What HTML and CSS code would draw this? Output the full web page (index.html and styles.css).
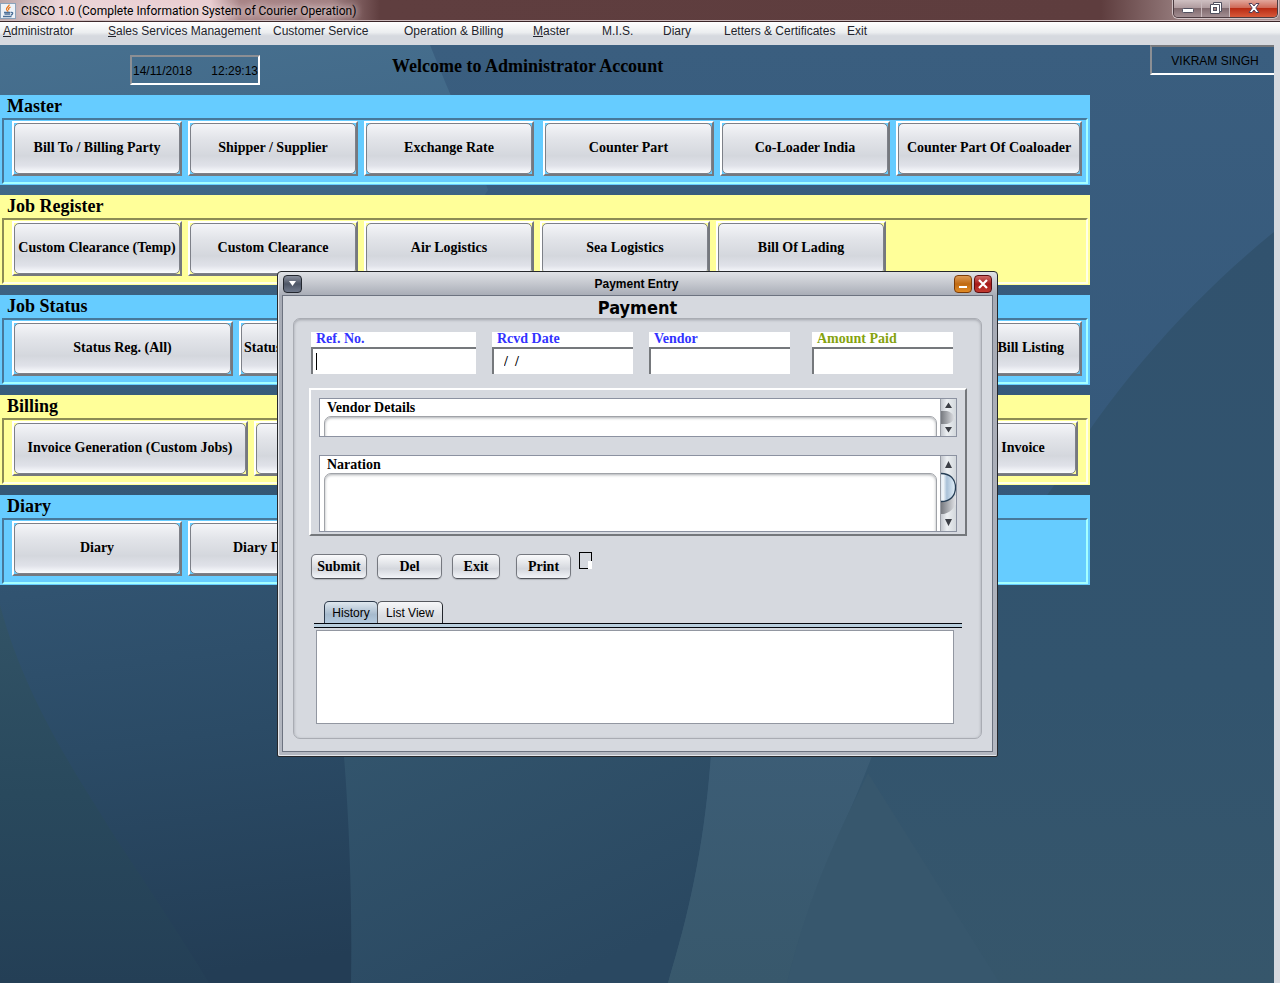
FILE: index.html
```html
<!DOCTYPE html>
<html lang="en">
<head>
  <meta charset="UTF-8">
  <meta name="viewport" content="width=device-width, initial-scale=1.0">
  <title>CISCO 1.0 (Complete Information System of Courier Operation)</title>
  <link rel="stylesheet" href="styles.css">
</head>
<body>

  <!-- window title bar -->
  <header class="titlebar">
    <svg class="app-icon" viewBox="0 0 16 16" aria-hidden="true">
      <rect x="0.5" y="0.5" width="15" height="15" fill="#eef3f8" stroke="#8ba3bb"/>
      <path d="M9 1.5C10 3 6 4.5 6.500 6.500C7 7.500 8 8 8 8.800M10.500 4C8.500 5 8 6 9 7.200" fill="none" stroke="#e8761c" stroke-width="1.300"/>
      <path d="M4 9.500H10.500M4.500 11.200H10M3 13.500H11.500M11 9.500C13.500 9 13 11.500 10.800 12" fill="none" stroke="#4a6f97" stroke-width="1.300"/>
    </svg>
    <span class="titlebar-text">CISCO 1.0 (Complete Information System of Courier Operation)</span>
    <div class="win-buttons">
      <button type="button" class="win-btn" aria-label="Minimize">
        <svg width="14" height="12" viewBox="0 0 14 12"><rect x="1.500" y="6.500" width="11" height="4" rx="1" fill="#fff" stroke="#50505f"/></svg>
      </button>
      <button type="button" class="win-btn" aria-label="Restore">
        <svg width="14" height="12" viewBox="0 0 14 12"><path d="M4.500 0.500H12.500V9.500H10.500V11.500H1.500V2.500H4.500Z" fill="#fff" stroke="#50505f"/><path d="M4.500 2.500H10.500V9.500" fill="none" stroke="#50505f"/><rect x="4.500" y="5.500" width="3" height="3" fill="#a88" stroke="#50505f"/></svg>
      </button>
      <button type="button" class="win-btn win-close" aria-label="Close">
        <svg width="14" height="12" viewBox="0 0 14 12"><path d="M2 1.500H5L7 4L9 1.500H12L8.800 6L12 10.500H9L7 8L5 10.500H2L5.200 6Z" fill="#fff" stroke="#50405a"/></svg>
      </button>
    </div>
  </header>

  <nav class="menubar">
    <a href="#"><u>A</u>dministrator</a>
    <a href="#"><u>S</u>ales Services Management</a>
    <a href="#">Customer Service</a>
    <a href="#">Operation &amp; Billing</a>
    <a href="#"><u>M</u>aster</a>
    <a href="#">M.I.S.</a>
    <a href="#">Diary</a>
    <a href="#">Letters &amp; Certificates</a>
    <a href="#">Exit</a>
  </nav>

  <main class="desktop">
    <svg class="wallpaper" viewBox="0 45 1274 938" preserveAspectRatio="none" aria-hidden="true">
      <defs>
        <linearGradient id="base" x1="0" y1="0" x2="0" y2="1">
          <stop offset="0" stop-color="#3a5e7f"/>
          <stop offset="0.5" stop-color="#35587a"/>
          <stop offset="1" stop-color="#36566c"/>
        </linearGradient>
        <linearGradient id="left" gradientUnits="userSpaceOnUse" x1="0" y1="45" x2="120" y2="983">
          <stop offset="0" stop-color="#47708f"/>
          <stop offset="0.3" stop-color="#3b6080"/>
          <stop offset="0.58" stop-color="#315370"/>
          <stop offset="0.75" stop-color="#2b4b66"/>
          <stop offset="1" stop-color="#233d55"/>
        </linearGradient>
        <linearGradient id="mid" gradientUnits="userSpaceOnUse" x1="400" y1="650" x2="560" y2="983">
          <stop offset="0" stop-color="#34576f"/>
          <stop offset="1" stop-color="#2a4861"/>
        </linearGradient>
        <linearGradient id="wedge" x1="0" y1="0" x2="0" y2="1">
          <stop offset="0" stop-color="#325366"/>
          <stop offset="0.5" stop-color="#29495d"/>
          <stop offset="1" stop-color="#243f56"/>
        </linearGradient>
        <linearGradient id="band" x1="0" y1="0" x2="0" y2="1">
          <stop offset="0" stop-color="#3c5d76"/>
          <stop offset="1" stop-color="#38586c"/>
        </linearGradient>
        <linearGradient id="right" gradientUnits="userSpaceOnUse" x1="0" y1="232" x2="0" y2="983">
          <stop offset="0" stop-color="#31526e"/>
          <stop offset="0.6" stop-color="#32546e"/>
          <stop offset="1" stop-color="#36566b"/>
        </linearGradient>
      </defs>
      <rect x="0" y="45" width="1274" height="938" fill="url(#base)"/>
      <path d="M1274 232C1190 300 1110 390 1053 487L868 740L700 983H1274Z" fill="url(#right)"/>
      <path d="M300 580H900V740H712C706 840 690 910 668 983H300Z" fill="url(#mid)"/>
      <path d="M0 45H430C450 95 475 150 488 190L300 480C335 600 354 800 351 983H0Z" fill="url(#left)"/>
      <path d="M0 605C25 700 80 780 115 837C150 890 180 935 209 983H0Z" fill="url(#wedge)"/>
      <path d="M712 740C706 840 690 910 668 983H787C810 890 845 830 878 740Z" fill="url(#band)"/>
      <path d="M868 773L1000 983H787C810 890 840 830 868 773Z" fill="#37576d"/>
    </svg>

    <div class="topline">
      <div class="clock"><span>14/11/2018</span><span>12:29:13</span></div>
      <h1 class="welcome">Welcome to Administrator Account</h1>
      <div class="user">VIKRAM SINGH</div>
    </div>

    <div class="panels">
      <section class="panel blue">
        <h2>Master</h2>
        <div class="panel-row">
          <button type="button">Bill To / Billing Party</button>
          <button type="button">Shipper / Supplier</button>
          <button type="button">Exchange Rate</button>
          <button type="button" class="apart">Counter Part</button>
          <button type="button">Co-Loader India</button>
          <button type="button" class="w-coloader">Counter Part Of Coaloader</button>
        </div>
      </section>

      <section class="panel yellow">
        <h2>Job Register</h2>
        <div class="panel-row">
          <button type="button">Custom Clearance (Temp)</button>
          <button type="button">Custom Clearance</button>
          <button type="button">Air Logistics</button>
          <button type="button">Sea Logistics</button>
          <button type="button">Bill Of Lading</button>
        </div>
      </section>

      <section class="panel blue">
        <h2>Job Status</h2>
        <div class="panel-row">
          <button type="button" class="w-status">Status Reg. (All)</button>
          <button type="button" class="text-left">Status</button>
          <button type="button" class="push text-right">Bill Listing</button>
        </div>
      </section>

      <section class="panel yellow">
        <h2>Billing</h2>
        <div class="panel-row row-billing">
          <button type="button" class="w-invoice">Invoice Generation (Custom Jobs)</button>
          <button type="button" aria-label="Billing"></button>
          <button type="button" class="push w-short">Invoice</button>
        </div>
      </section>

      <section class="panel blue">
        <h2>Diary</h2>
        <div class="panel-row">
          <button type="button">Diary</button>
          <button type="button" class="text-indent">Diary D</button>
        </div>
      </section>
    </div>

    <!-- payment entry internal frame -->
    <div class="frame" role="dialog" aria-labelledby="frameTitle">
      <div class="frame-bar">
        <button type="button" class="frame-btn" aria-label="Window menu">
          <svg width="9" height="7" viewBox="0 0 9 7"><path d="M1 1H8L4.500 6Z" fill="#fff"/></svg>
        </button>
        <span class="frame-title" id="frameTitle">Payment Entry</span>
        <button type="button" class="frame-btn orange" aria-label="Minimize">
          <svg width="10" height="10" viewBox="0 0 10 10"><rect x="1" y="7" width="8" height="2" fill="#fff"/></svg>
        </button>
        <button type="button" class="frame-btn red" aria-label="Close">
          <svg width="10" height="10" viewBox="0 0 10 10"><path d="M1 1L9 9M9 1L1 9" stroke="#fff" stroke-width="2.200"/></svg>
        </button>
      </div>

      <form class="frame-body">
        <h3>Payment</h3>
        <div class="form-box">
          <div class="fields">
            <div class="field field-ref">
              <label for="refNo">Ref. No.</label>
              <div class="field-input"><span class="caret"></span><input type="text" id="refNo"></div>
            </div>
            <div class="field">
              <label for="rcvdDate">Rcvd Date</label>
              <div class="field-input"><input type="text" id="rcvdDate" class="date" value="/  /"></div>
            </div>
            <div class="field">
              <label for="vendor">Vendor</label>
              <div class="field-input"><input type="text" id="vendor"></div>
            </div>
            <div class="field field-amount">
              <label for="amount">Amount Paid</label>
              <div class="field-input"><input type="text" id="amount"></div>
            </div>
          </div>

          <div class="notes">
            <div class="note note-vendor">
              <div class="note-main">
                <label for="vendorDetails">Vendor Details</label>
                <textarea id="vendorDetails"></textarea>
              </div>
              <svg class="scroll" width="15" height="37" viewBox="0 0 15 37" aria-hidden="true">
                <defs>
                  <linearGradient id="track"><stop offset="0" stop-color="#c4c8cf"/><stop offset="0.4" stop-color="#eceff2"/><stop offset="1" stop-color="#d3d8dc"/></linearGradient>
                  <linearGradient id="shade"><stop offset="0" stop-color="#777a80"/><stop offset="1" stop-color="#e2e4e8"/></linearGradient>
                </defs>
                <rect width="15" height="37" fill="url(#track)"/>
                <path d="M0 12H6Q11 13 14 18.500Q11 24 6 25H0Z" fill="url(#shade)"/>
                <path d="M4 9H11L7.500 3.500ZM4 28H11L7.500 33.500Z" fill="#3c3f46"/>
              </svg>
            </div>
            <div class="note note-naration">
              <div class="note-main">
                <label for="naration">Naration</label>
                <textarea id="naration"></textarea>
              </div>
              <svg class="scroll" width="15" height="75" viewBox="0 0 15 75" aria-hidden="true">
                <defs>
                  <linearGradient id="thumb"><stop offset="0" stop-color="#dfe9f2"/><stop offset="0.150" stop-color="#f4f8fb"/><stop offset="0.400" stop-color="#a9c1d8"/><stop offset="1" stop-color="#e4f1fa"/></linearGradient>
                </defs>
                <rect width="15" height="75" fill="url(#track)"/>
                <path d="M0 40H15V48Q11 56 3 58H0Z" fill="url(#shade)"/>
                <path d="M0 17.500C9 17.500 14.500 23 14.500 31.500C14.500 40 9 45.500 0 45.500" fill="url(#thumb)" stroke="#263e55" stroke-width="1.300"/>
                <path d="M4 12H11L7.500 5ZM4 63H11L7.500 70Z" fill="#3c3f46"/>
              </svg>
            </div>
          </div>

          <div class="actions">
            <button type="button" class="w-submit">Submit</button>
            <button type="button" class="w-del">Del</button>
            <button type="button" class="w-exit">Exit</button>
            <button type="button" class="w-print">Print</button>
            <svg class="marker" width="13" height="17" viewBox="0 0 13 17" aria-hidden="true">
              <rect x="0.500" y="0.500" width="12" height="16" fill="none" stroke="#000"/>
              <rect x="9" y="9" width="4" height="8" fill="#fff"/>
            </svg>
          </div>

          <div class="tabs" role="tablist">
            <button type="button" role="tab" class="active" aria-selected="true">History</button>
            <button type="button" role="tab" aria-selected="false">List View</button>
          </div>
          <div class="tab-line"></div>
          <div class="tab-pane" role="tabpanel"></div>
        </div>
      </form>
    </div>
  </main>

</body>
</html>
```

FILE: styles.css
```css
* {
  box-sizing: border-box;
}
html {
  height: 100%;
}
body {
  margin: 0;
  min-height: 100%;
  display: flex;
  flex-direction: column;
  background: #d6d9df;
  font-family: "Liberation Sans", Arial, sans-serif;
  font-size: 12px;
  color: #000;
}
button, input, textarea {
  font: inherit;
  color: inherit;
  margin: 0;
}
h1, h2, h3 {
  margin: 0;
  font-weight: bold;
}

/* title bar */
.titlebar {
  display: flex;
  align-items: center;
  height: 22px;
  gap: 5px;
  background: linear-gradient(to right, #b9a4a6 0, #ecd5d8 60px, #e9cdd0 210px, #a88486 240px, #a38284 330px, #5f3e3f 380px, #5e3d3e 86%, #9d8485 93%, #a89292 100%);
  border-bottom: 1px solid #3a2528;
  box-shadow: inset 0 -1px #cbb9bb;
}
.app-icon {
  width: 16px;
  height: 16px;
}
.titlebar-text {
  flex: 1;
  font-family: Roboto, "Noto Sans", sans-serif;
  font-size: 12px;
  line-height: 20px;
  white-space: nowrap;
  text-shadow: 0 0 6px #eedfe1, 0 0 8px #eedfe1;
}
.win-buttons {
  display: flex;
  align-self: flex-start;
  margin-right: 2px;
  border: 1px solid #4b3b40;
  border-top: 0;
  border-radius: 0 0 5px 5px;
  overflow: hidden;
  box-shadow: 0 0 0 1px #d2c4c6;
}
.win-btn {
  width: 28px;
  height: 17px;
  padding: 0 0 1px;
  border: 0;
  border-right: 1px solid #c9babd;
  background: linear-gradient(#cfc0c2 0, #b09c9f 45%, #806a6e 50%, #a28e92 100%);
  display: flex;
  align-items: center;
  justify-content: center;
}
.win-close {
  width: 47px;
  border-right: 0;
  background: linear-gradient(#e2a79c 0, #cf6a58 45%, #b92c14 50%, #d8593a 100%);
}

/* menu bar */
.menubar {
  display: grid;
  grid-template-columns: 105px 165px 131px 129px 69px 61px 61px 123px auto;
  padding: 0 3px;
  height: 23px;
  background: linear-gradient(#fff 0, #eceef0 45%, #d6d9df 60%);
}
.menubar a {
  color: #23242c;
  text-decoration: none;
  white-space: nowrap;
  line-height: 18px;
}

/* desktop */
.desktop {
  position: relative;
  flex: 1;
  margin-right: 6px;
}
.wallpaper {
  position: absolute;
  left: 0;
  top: 0;
  width: 100%;
  height: 100%;
}
.topline {
  position: relative;
  display: flex;
  align-items: flex-start;
  height: 50px;
}
.clock {
  display: flex;
  justify-content: space-between;
  align-items: center;
  width: 130px;
  height: 30px;
  margin: 10px 0 0 130px;
  padding: 2px 0 0 1px;
  border: 2px solid;
  border-color: #8c8f94 #fff #fff #8c8f94;
}
.welcome {
  margin: 11px auto 0 132px;
  font: bold 18px/21px "Liberation Serif", "Times New Roman", serif;
}
.user {
  width: 124px;
  height: 30px;
  padding-left: 4px;
  line-height: 28px;
  text-align: center;
  border: 2px solid;
  border-color: #77797d transparent #fff #8c8f94;
  border-right: 0;
}

/* panels */
.panels {
  position: relative;
  display: flex;
  flex-direction: column;
  gap: 10px;
  max-width: 1090px;
  font-family: "Liberation Serif", "Times New Roman", serif;
}
.panel {
  height: 90px;
  padding: 0 2px 1px;
}
.panel.blue {
  background: #66ccff;
  --dark: #47789a;
  --light: #a5ffff;
}
.panel.yellow {
  background: #ffff99;
  --dark: #8c8c55;
  --light: #ffffe6;
}
.panel h2 {
  height: 23px;
  padding-left: 5px;
  font-size: 18px;
  line-height: 23px;
}
.panel-row {
  display: flex;
  gap: 6px;
  height: 66px;
  padding: 1px 4px 6px 8px;
  border: 2px solid;
  border-color: var(--dark) var(--light) var(--light) var(--dark);
}
.panel-row button {
  position: relative;
  z-index: 0;
  flex: none;
  width: 170px;
  height: 55px;
  padding: 0 0 1px;
  border: 2px solid;
  border-color: #fff #75787e #75787e #fff;
  background: none;
  font-size: 14px;
  font-weight: bold;
  white-space: nowrap;
}
/* rounded face inside the square bevel */
.panel-row button::before {
  content: "";
  position: absolute;
  inset: 0;
  z-index: -1;
  border: 1px solid #7d8088;
  border-radius: 5px;
  background: linear-gradient(#f4f5f8 0, #e2e4e9 30%, #d4d7dd 65%, #e0e2e9 85%, #fbfcff 100%);
}
.panel-row .apart {
  margin-left: 3px;
  width: 171px;
}
.panel-row .w-coloader {
  width: 186px;
}
.panel-row .w-status {
  width: 221px;
}
.panel-row .w-invoice {
  width: 236px;
}
.panel-row .w-short {
  width: 110px;
}
.panel-row .push {
  margin-left: auto;
}
.panel-row .text-left {
  text-align: left;
  padding-left: 3px;
}
.panel-row .text-right {
  text-align: right;
  padding-right: 16px;
}
.panel-row .text-indent {
  text-align: left;
  padding-left: 43px;
}
.row-billing {
  padding-right: 8px;
}

/* internal frame */
.frame {
  position: absolute;
  left: 277px;
  top: 226px;
  width: 721px;
  max-width: 100%;
  padding: 0 4px 4px;
  border: 1px solid #25272b;
  border-radius: 4px 4px 2px 2px;
  background: linear-gradient(#e0e2e6 0, #a7abb5 24px, #b3b7c0 100%);
  box-shadow: inset 1px -1px #e6e8ec;
}
.frame-bar {
  display: flex;
  align-items: center;
  gap: 2px;
  height: 23px;
  padding: 0 1px;
}
.frame-title {
  flex: 1;
  padding-left: 17px;
  text-align: center;
  font-weight: bold;
}
.frame-btn {
  display: flex;
  align-items: center;
  justify-content: center;
  width: 19px;
  height: 18px;
  padding: 0;
  border: 1px solid #23272f;
  border-radius: 4px;
  background: linear-gradient(#8a909e, #4e5666 50%, #6f788a);
}
.frame-btn.orange {
  width: 18px;
  border-color: #7c3d08;
  background: linear-gradient(#dd9a55, #c06a12 50%, #e08a24);
}
.frame-btn.red {
  width: 18px;
  border-color: #5c0d10;
  background: linear-gradient(#cf6a66, #a51a18 50%, #c33a30);
}
.frame-body {
  height: 457px;
  padding: 1px 10px 12px;
  border: 1px solid #6d7380;
  background: #d6d9df;
}
.frame-body h3 {
  height: 21px;
  text-align: center;
  font: bold 18px/21px "DejaVu Sans Condensed", "Noto Sans", sans-serif;
}
.form-box {
  height: 421px;
  padding: 13px 14px 0 15px;
  border: 1px solid #a9acb3;
  border-radius: 7px;
  box-shadow: inset 0 1px 3px #9fa2a9;
}

.fields {
  display: flex;
  gap: 16px;
  padding-left: 2px;
  height: 56px;
}
.field {
  width: 141px;
  height: 42px;
  font: bold 14px "Liberation Serif", "Times New Roman", serif;
  color: #3333ff;
}
.field label {
  display: block;
  height: 15px;
  padding-left: 5px;
  line-height: 14px;
  background: #fff;
}
.field-ref {
  width: 165px;
}
.field-amount {
  margin-left: 6px;
  color: #86a30f;
}
.field-input {
  display: flex;
  align-items: center;
  height: 27px;
  padding-left: 3px;
  border-top: 2px solid #75787c;
  border-left: 2px solid #75787c;
  background: #fff;
}
.field-input input {
  flex: 1;
  min-width: 0;
  padding: 0;
  border: 0;
  outline: 0;
  background: none;
  color: #000;
  white-space: pre;
}
.field-input .date {
  padding-left: 7px;
}
.caret {
  width: 1px;
  height: 17px;
  background: #000;
}

.notes {
  display: flex;
  flex-direction: column;
  gap: 18px;
  width: 658px;
  max-width: 100%;
  height: 148px;
  padding: 8px 8px 0;
  border: 2px solid;
  border-color: #fff #75787c #75787c #fff;
}
.note {
  display: flex;
  height: 39px;
  border: 1px solid #8c92a1;
  background: #fff;
  overflow: hidden;
}
.note-naration {
  height: 77px;
}
.note-main {
  flex: 1;
  padding: 0 3px 0 4px;
  font: bold 14px "Liberation Serif", "Times New Roman", serif;
}
.note-main label {
  display: block;
  height: 17px;
  padding-left: 3px;
  line-height: 17px;
}
.note-main textarea {
  display: block;
  width: 100%;
  height: 90px;
  padding: 4px;
  border: 1px solid #a0a3a8;
  border-radius: 7px;
  box-shadow: inset 0 1px 3px #a9acb0;
  resize: none;
  outline: 0;
}
.scroll {
  display: block;
  border-left: 1px solid #9a9ea6;
  box-sizing: content-box;
}

.actions {
  display: flex;
  gap: 10px;
  padding: 18px 2px 0;
}
.actions button {
  height: 25px;
  padding: 0;
  border: 1px solid #75787f;
  border-bottom-color: #50535a;
  border-radius: 5px;
  background: linear-gradient(#fafafc 0, #e4e6ea 35%, #d4d7dd 60%, #f2f4f8 100%);
  box-shadow: 0 1px 1px #b0b3b9;
  font: bold 14px "Liberation Serif", "Times New Roman", serif;
}
.actions .w-submit {
  width: 56px;
}
.actions .w-del {
  width: 65px;
}
.actions .w-exit {
  width: 48px;
}
.actions .w-print {
  width: 55px;
  margin-left: 6px;
}
.marker {
  display: block;
  margin: -2px 0 0 -2px;
}

.tabs {
  display: flex;
  margin: 22px 0 0 15px;
}
.tabs button {
  height: 22px;
  width: 54px;
  padding: 0;
  border: 1px solid #2e3b4c;
  border-bottom: 0;
  border-radius: 5px 5px 0 0;
  background: linear-gradient(#f6f7f9, #d9dce1 70%);
}
.tabs button + button {
  width: 66px;
  margin-left: -1px;
  border-color: #55585e #23262c #55585e #55585e;
}
.tabs .active {
  background: linear-gradient(#dfe7ee, #a6bacd 60%, #b4cade);
}
.tab-line {
  width: 648px;
  max-width: 100%;
  height: 5px;
  margin-left: 5px;
  border: solid #04060c;
  border-width: 1px 0;
  background: #b9cedd;
}
.tab-pane {
  width: 638px;
  max-width: 100%;
  height: 94px;
  margin: 2px 0 0 7px;
  border: 1px solid #9297a1;
  background: #fff;
}
```
